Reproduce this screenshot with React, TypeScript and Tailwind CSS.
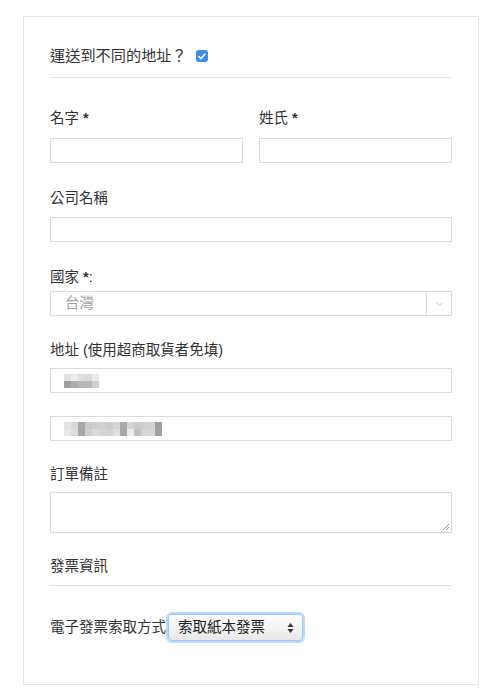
import React from 'react';

const font = { fontFamily: '"Helvetica Neue", "Liberation Sans", "Noto Sans CJK TC", sans-serif' };

const row1 = ['#e2e1e3', '#ededf0', '#dedede', '#d9dad9', '#ebebeb'];
const row2 = ['#a19ea1', '#b0aeb2', '#b7b7b7', '#b9bab8', '#cfcfcf'];
const row3 = ['#e3e1e3', '#d7d6d8', '#a8a7a9', '#c9c8ca', '#cfcdcf', '#d4d0d2', '#cbccd0', '#d6d5d6', '#a9a9ab', '#d5d5d7', '#cdcacd', '#d1cfd3', '#d2d2d4', '#9e9e9f'];
const row4 = ['#e8e6e8', '#dcdbdd', '#a5a4a6', '#cfced0', '#dcd9da', '#d9d5d7', '#d1d3d6', '#dedede', '#a6a6a7', '#ebebeb', '#c1bfc1', '#d7d5d8', '#d6d6d8', '#a1a1a2'];

const Blur = ({ top, bottom }: { top: string[]; bottom: string[] }) => (
  <div className="flex flex-col">
    <div className="flex">
      {top.map((c, i) => (
        <div key={i} className="w-[7px] h-[7px]" style={{ background: c }} />
      ))}
    </div>
    <div className="flex">
      {bottom.map((c, i) => (
        <div key={i} className="w-[7px] h-[7px]" style={{ background: c }} />
      ))}
    </div>
  </div>
);

const Label = ({ children, className = '' }: { children: React.ReactNode; className?: string }) => (
  <div className={`h-[20px] leading-[20px] text-[14.5px] text-[#333] ${className}`}>{children}</div>
);

export default function App() {
  return (
    <div className="min-h-[700px] w-[500px] bg-white pt-[16px]" style={font}>
      <div className="ml-[23px] w-[456px] h-[669px] border border-[#e4e4e4] bg-white px-[26px] pt-[29px]">
        <div className="flex items-center h-[20px] text-[15.2px] text-[#333]">
          <span>運送到不同的地址？</span>
          <span className="ml-[9px] w-[12px] h-[12px] rounded-[3px] bg-[#3a8ef3] flex items-center justify-center">
            <svg width="8" height="7" viewBox="0 0 8 7" fill="none">
              <path d="M1 3.6 L3 5.6 L7 1" stroke="white" strokeWidth="1.5" strokeLinecap="round" strokeLinejoin="round" />
            </svg>
          </span>
        </div>
        <div className="mt-[11px] border-t border-[#e2e2e2]" />

        <div className="mt-[30px] flex gap-[16px]">
          <div className="flex-1">
            <Label>名字 <b className="font-bold">*</b></Label>
            <div className="mt-[10px] h-[25px] border border-[#dcdcdc]" />
          </div>
          <div className="flex-1">
            <Label>姓氏 <b className="font-bold">*</b></Label>
            <div className="mt-[10px] h-[25px] border border-[#dcdcdc]" />
          </div>
        </div>

        <Label className="mt-[25px]">公司名稱</Label>
        <div className="mt-[9px] h-[25px] border border-[#dcdcdc]" />

        <Label className="mt-[25px]">國家 <b className="font-bold">*</b>:</Label>
        <div className="mt-[4px] h-[25px] border border-[#dcdcdc] flex items-center">
          <span className="flex-1 pl-[14px] text-[14.5px] text-[#a0a0a0]">台灣</span>
          <span className="w-[25px] h-full border-l border-[#dcdcdc] flex items-center justify-center">
            <svg width="7" height="4" viewBox="0 0 7 4" fill="none">
              <path d="M0.5 0.5 L3.5 3.2 L6.5 0.5" stroke="#c4c4c4" strokeWidth="1" />
            </svg>
          </span>
        </div>

        <Label className="mt-[24px]">地址 (使用超商取貨者免填)</Label>
        <div className="mt-[8px] h-[25px] border border-[#dcdcdc] flex items-center pl-[13px]">
          <Blur top={row1} bottom={row2} />
        </div>
        <div className="mt-[23px] h-[25px] border border-[#dcdcdc] flex items-center pl-[13px]">
          <Blur top={row3} bottom={row4} />
        </div>

        <Label className="mt-[23px]">訂單備註</Label>
        <div className="mt-[8px] h-[41px] border border-[#dcdcdc] flex items-end justify-end p-[2px]">
          <svg width="7" height="7" viewBox="0 0 7 7">
            <path d="M1 7 L7 1 M4 7 L7 4" stroke="#9a9a9a" strokeWidth="1" />
          </svg>
        </div>

        <Label className="mt-[23px]">發票資訊</Label>
        <div className="mt-[9px] border-t border-[#e2e2e2]" />

        <div className="mt-[28px] flex items-center">
          <span className="text-[14.5px] text-[#333]">電子發票索取方式</span>
          <div className="ml-[2px] w-[135px] h-[27px] rounded-[4px] border border-[#9ec6f2] shadow-[0_0_0_2px_#bcd9fa] bg-gradient-to-b from-[#ffffff] to-[#e8e8e8] flex items-center pl-[9px] pr-[8px]">
            <span className="flex-1 text-[14.5px] text-[#222]">索取紙本發票</span>
            <svg width="7" height="12" viewBox="0 0 7 12">
              <path d="M3.5 1 L6.5 5 L0.5 5 Z" fill="#333" />
              <path d="M3.5 11 L6.5 7 L0.5 7 Z" fill="#333" />
            </svg>
          </div>
        </div>
      </div>
    </div>
  );
}
